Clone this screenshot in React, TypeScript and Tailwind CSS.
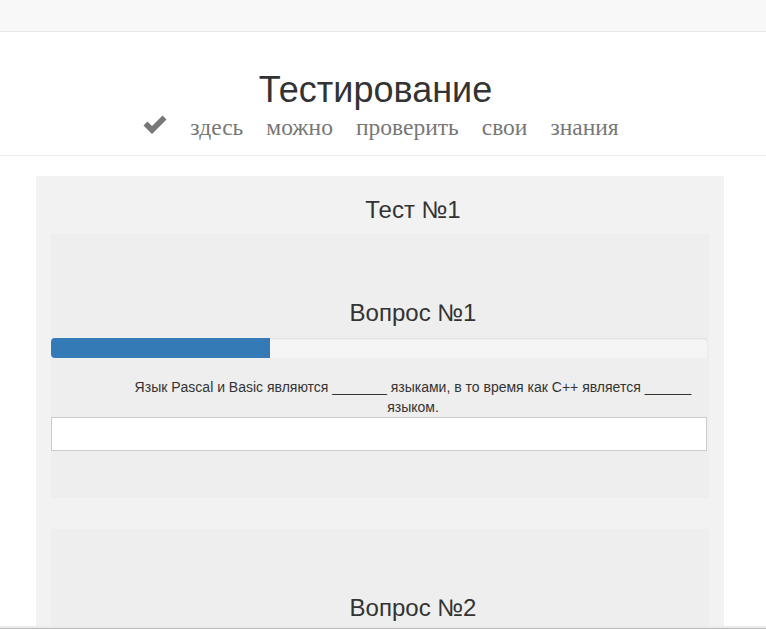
const sans = { fontFamily: '"Liberation Sans", Arial, sans-serif' };

function CheckIcon() {
  return (
    <svg width="24" height="20" viewBox="0 0 24 20" className="shrink-0 -mt-[6px]">
      <path d="M0.5 11.5 L4.5 7.5 L9 12 L19.5 1.5 L23.5 5.5 L9 20 Z" fill="#777" />
    </svg>
  );
}

function Question({ n, progress }: { n: number; progress: number }) {
  return (
    <div className="bg-[#eeeeee] pt-[65px] pb-[47px]">
      <h3 className="text-[24px] leading-[27px] text-[#333] text-center pl-[66px]">Вопрос №{n}</h3>
      <div className="mt-3 h-5 mr-[1px] rounded bg-[#f5f5f5] overflow-hidden shadow-[inset_0_1px_2px_rgba(0,0,0,0.1)]">
        <div className="h-full bg-[#337ab7]" style={{ width: `${progress}%` }} />
      </div>
      <p className="mt-[19px] text-sm leading-5 text-[#333] text-center pl-[66px]">
        Язык Pascal и Basic являются _______ языками, в то время как C++ является ______ языком.
      </p>
      <input className="block w-[656px] h-[34px] bg-white border border-[#ccc] outline-none" />
    </div>
  );
}

export default function App() {
  return (
    <div className="min-h-screen bg-white" style={sans}>
      <nav className="h-8 bg-[#f8f8f8] border-b border-[#e7e7e7]" />
      <header className="border-b border-[#eee] pb-[12px] pt-[38px]">
        <h1 className="text-center text-[36px] leading-[40px] text-[#333] pr-[15px]">Тестирование</h1>
        <div
          className="flex items-center justify-center gap-[23px] text-[23.5px] leading-[32px] text-[#777] mt-[1px] pr-[4px]"
          style={{ fontFamily: '"Liberation Serif", "Times New Roman", serif' }}
        >
          <CheckIcon />
          <span>здесь</span>
          <span>можно</span>
          <span>проверить</span>
          <span>свои</span>
          <span>знания</span>
        </div>
      </header>
      <main className="mt-5 ml-[36px] w-[688px] bg-[#f2f2f2] px-[15px] pb-10">
        <h2 className="pt-[20px] pb-[11px] text-center text-[24px] leading-[27px] text-[#333] pl-[66px]">Тест №1</h2>
        <div className="flex flex-col gap-[31px]">
          <Question n={1} progress={33.4} />
          <Question n={2} progress={66} />
        </div>
      </main>
      <div className="fixed bottom-0 left-0 right-0 h-[3px] bg-[#ebebeb] border-b border-[#bcbcbc]" />
    </div>
  );
}
